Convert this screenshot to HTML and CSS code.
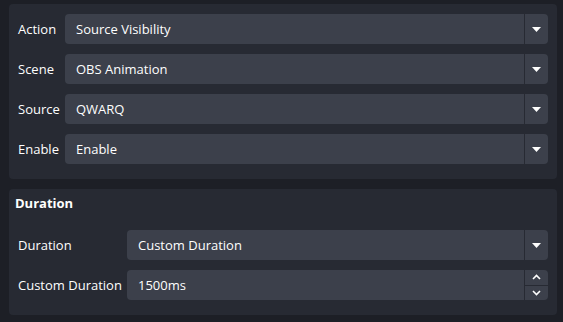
FILE: index.html
```html
<!DOCTYPE html>
<html>
<head>
<meta charset="utf-8">
<link rel="stylesheet" href="styles.css">
</head>
<body>
<div class="page">
  <div class="panel panel-main">
    <div class="form form-a">
      <div class="label">Action</div>
      <div class="combo"><span class="val">Source Visibility</span><span class="btn"><svg width="9" height="5" viewBox="0 0 9 5"><path d="M0 0H9L4.5 5Z" fill="#fefefe"/></svg></span></div>
      <div class="label">Scene</div>
      <div class="combo"><span class="val">OBS Animation</span><span class="btn"><svg width="9" height="5" viewBox="0 0 9 5"><path d="M0 0H9L4.5 5Z" fill="#fefefe"/></svg></span></div>
      <div class="label">Source</div>
      <div class="combo"><span class="val">QWARQ</span><span class="btn"><svg width="9" height="5" viewBox="0 0 9 5"><path d="M0 0H9L4.5 5Z" fill="#fefefe"/></svg></span></div>
      <div class="label">Enable</div>
      <div class="combo"><span class="val">Enable</span><span class="btn"><svg width="9" height="5" viewBox="0 0 9 5"><path d="M0 0H9L4.5 5Z" fill="#fefefe"/></svg></span></div>
    </div>
  </div>
  <div class="panel panel-dur">
    <div class="title">Duration</div>
    <div class="form form-b">
      <div class="label">Duration</div>
      <div class="combo"><span class="val">Custom Duration</span><span class="btn"><svg width="9" height="5" viewBox="0 0 9 5"><path d="M0 0H9L4.5 5Z" fill="#fefefe"/></svg></span></div>
      <div class="label">Custom Duration</div>
      <div class="combo"><span class="val">1500ms</span><span class="spin"><span class="sbtn"><svg width="9" height="6" viewBox="0 0 9 6"><path d="M1 5L4.5 1.5L8 5" stroke="#fefefe" stroke-width="1.6" fill="none"/></svg></span><span class="sbtn sdown"><svg width="9" height="6" viewBox="0 0 9 6"><path d="M1 1L4.5 4.5L8 1" stroke="#fefefe" stroke-width="1.6" fill="none"/></svg></span></span></div>
    </div>
  </div>
</div>
</body>
</html>
```
FILE: styles.css
```css
html, body {
  margin: 0;
  padding: 0;
  background: #1d1f26;
}
body {
  width: 563px;
  height: 322px;
  overflow: hidden;
  font-family: "Open Sans", "DejaVu Sans", sans-serif;
  font-size: 13px;
  color: #fefefe;
}
.page {
  padding: 4px 6px 0 9px;
  display: flex;
  flex-direction: column;
  gap: 10px;
}
.panel {
  background: #272a33;
  border-radius: 4px;
  box-sizing: border-box;
}
.panel-main {
  height: 175px;
  padding: 10px 9px 0 9px;
}
.panel-dur {
  height: 126px;
  padding: 4px 9px 0 6px;
}
.title {
  font-weight: bold;
  height: 20px;
  line-height: 20px;
}
.form {
  display: grid;
  row-gap: 10px;
  align-items: center;
}
.form-a {
  grid-template-columns: 47px 1fr;
}
.form-b {
  margin-top: 17px;
  padding-left: 3px;
  grid-template-columns: 109px 1fr;
}
.label {
  line-height: 18px;
}
.combo {
  height: 30px;
  background: #3c404b;
  border-radius: 4px;
  display: flex;
  align-items: center;
}
.val {
  flex: 1;
  padding-left: 11px;
}
.btn {
  width: 23px;
  height: 30px;
  border-left: 1px solid #272a33;
  display: flex;
  align-items: center;
  justify-content: center;
}
.spin {
  width: 23px;
  height: 30px;
  border-left: 1px solid #272a33;
  display: flex;
  flex-direction: column;
}
.sbtn {
  flex: 1;
  display: flex;
  align-items: center;
  justify-content: center;
}
.sdown {
  border-top: 1px solid #272a33;
}
```
